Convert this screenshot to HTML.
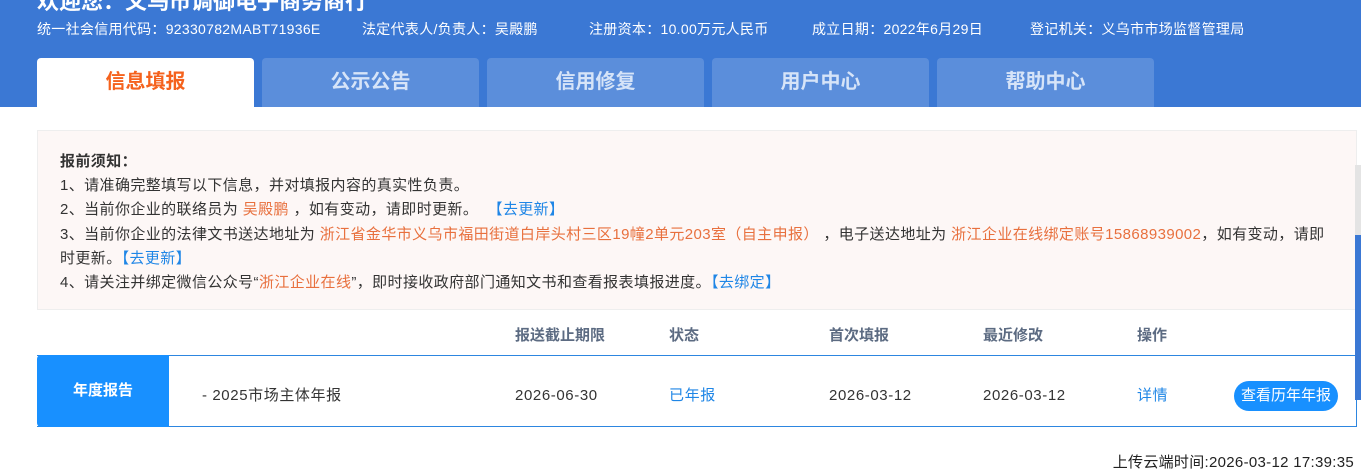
<!DOCTYPE html>
<html><head><meta charset="utf-8"><style>
*{margin:0;padding:0;box-sizing:border-box}
body{width:1361px;height:476px;overflow:hidden;background:#fff;font-family:"Liberation Sans","Noto Sans CJK SC",sans-serif;position:relative;color:#333}
.hdr{position:absolute;left:0;top:0;width:1361px;height:107px;background:#3b78d4}
.a{position:absolute;white-space:nowrap}
.title{left:37px;top:-16px;font-size:22px;font-weight:bold;color:#fff}
.info{top:19px;font-size:14px;color:#fff;letter-spacing:0.3px;line-height:20px}
.tab{position:absolute;top:58px;width:217px;height:49px;background:#5b8edb;border-radius:4px 4px 0 0;color:#d6e4f8;font-size:20px;font-weight:bold;text-align:center;line-height:48px}
.tab.on{background:#fff;color:#f5621d}
.notice{position:absolute;left:37px;top:130px;width:1320px;height:180px;background:#fdf7f6;border:1px solid #eee;padding:19px 22px;font-size:15px;line-height:24.2px;color:#333;letter-spacing:0.4px}
.o{color:#e8703e}.b{color:#1f86e6}
.th{position:absolute;top:326px;font-size:15px;font-weight:bold;color:#5c6b82;line-height:20px}
.row{position:absolute;left:37px;top:355px;width:1320px;height:72px;border:1px solid #2d86e0;border-left:none}
.lab{position:absolute;left:37px;top:355px;width:132px;height:72px;background:#1890ff;border-radius:4px 0 0 4px;color:#fff;font-weight:bold;font-size:15px;text-align:center;line-height:72px}
.td{position:absolute;top:384px;font-size:15px;letter-spacing:0.6px;line-height:24px}
.dk{color:#333}
.btn{position:absolute;left:1234px;top:381px;width:104px;height:30px;background:#1890ff;border-radius:15px;color:#fff;font-size:15px;text-align:center;line-height:30px}
</style></head><body>
<div class="hdr"></div>
<div class="a title">欢迎您：义乌市调御电子商务商行</div>
<div class="a info" style="left:37px">统一社会信用代码：92330782MABT71936E</div>
<div class="a info" style="left:362px">法定代表人/负责人：吴殿鹏</div>
<div class="a info" style="left:589px">注册资本：10.00万元人民币</div>
<div class="a info" style="left:812px">成立日期：2022年6月29日</div>
<div class="a info" style="left:1030px">登记机关：义乌市市场监督管理局</div>
<div class="tab on" style="left:37px">信息填报</div>
<div class="tab" style="left:262px">公示公告</div>
<div class="tab" style="left:487px">信用修复</div>
<div class="tab" style="left:712px">用户中心</div>
<div class="tab" style="left:937px">帮助中心</div>
<div class="notice">
<div style="font-weight:bold">报前须知：</div>
<div>1、请准确完整填写以下信息，并对填报内容的真实性负责。</div>
<div>2、当前你企业的联络员为 <span class="o">吴殿鹏</span> ，如有变动，请即时更新。 &nbsp;<span class="b">【去更新】</span></div>
<div style="white-space:nowrap">3、当前你企业的法律文书送达地址为 <span class="o">浙江省金华市义乌市福田街道白岸头村三区19幢2单元203室（自主申报）</span> ，电子送达地址为 <span class="o">浙江企业在线绑定账号15868939002</span>，如有变动，请即<br>时更新。<span class="b">【去更新】</span></div>
<div>4、请关注并绑定微信公众号“<span class="o">浙江企业在线</span>”，即时接收政府部门通知文书和查看报表填报进度。<span class="b">【去绑定】</span></div>
</div>
<div class="th" style="left:515px">报送截止期限</div>
<div class="th" style="left:669px">状态</div>
<div class="th" style="left:829px">首次填报</div>
<div class="th" style="left:983px">最近修改</div>
<div class="th" style="left:1137px">操作</div>
<div class="row"></div>
<div class="lab">年度报告</div>
<div class="a td dk" style="left:202px">- 2025市场主体年报</div>
<div class="a td dk" style="left:515px">2026-06-30</div>
<div class="a td b" style="left:669px">已年报</div>
<div class="a td dk" style="left:829px">2026-03-12</div>
<div class="a td dk" style="left:983px">2026-03-12</div>
<div class="a td b" style="left:1137px">详情</div>
<div class="btn">查看历年年报</div>
<div class="a" style="right:7px;top:453px;font-size:15px;color:#222;letter-spacing:0.3px;line-height:20px">上传云端时间:2026-03-12 17:39:35</div>
<div class="a" style="left:1355px;top:165px;width:6px;height:70px;background:#e4e4e4"></div>
<div class="a" style="left:1355px;top:235px;width:6px;height:165px;background:#3b78d4"></div>
</body></html>
